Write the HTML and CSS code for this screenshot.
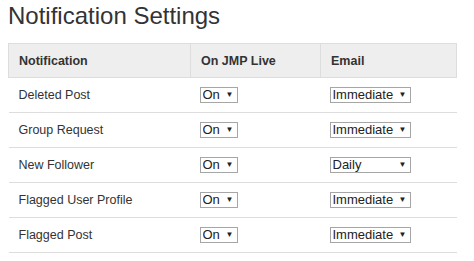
FILE: index.html
```html
<!DOCTYPE html>
<html lang="en">
<head>
    <meta charset="UTF-8">
    <title>Notification Settings</title>
    <link rel="stylesheet" href="styles.css">
</head>
<body>
    <h1>Notification Settings</h1>
    <table class="settings">
        <thead>
            <tr>
                <th class="col-name">Notification</th>
                <th class="col-live">On JMP Live</th>
                <th class="col-email">Email</th>
            </tr>
        </thead>
        <tbody>
            <tr>
                <td>Deleted Post</td>
                <td><span class="pick"><select><option>On</option><option>Off</option></select></span></td>
                <td><span class="pick"><select><option>Immediate</option><option>Daily</option><option>Weekly</option><option>Never</option></select></span></td>
            </tr>
            <tr>
                <td>Group Request</td>
                <td><span class="pick"><select><option>On</option><option>Off</option></select></span></td>
                <td><span class="pick"><select><option>Immediate</option><option>Daily</option><option>Weekly</option><option>Never</option></select></span></td>
            </tr>
            <tr>
                <td>New Follower</td>
                <td><span class="pick"><select><option>On</option><option>Off</option></select></span></td>
                <td><span class="pick"><select><option>Immediate</option><option selected>Daily</option><option>Weekly</option><option>Never</option></select></span></td>
            </tr>
            <tr>
                <td>Flagged User Profile</td>
                <td><span class="pick"><select><option>On</option><option>Off</option></select></span></td>
                <td><span class="pick"><select><option>Immediate</option><option>Daily</option><option>Weekly</option><option>Never</option></select></span></td>
            </tr>
            <tr>
                <td>Flagged Post</td>
                <td><span class="pick"><select><option>On</option><option>Off</option></select></span></td>
                <td><span class="pick"><select><option>Immediate</option><option>Daily</option><option>Weekly</option><option>Never</option></select></span></td>
            </tr>
        </tbody>
    </table>
</body>
</html>
```

FILE: styles.css
```css
body {
    font-family: "Liberation Sans", Arial, sans-serif;
    font-size: 12.5px;
    color: #333;
    margin: 0;
    padding: 0 8px;
}
h1 {
    font-size: 24px;
    font-weight: normal;
    line-height: 28px;
    margin: 2px 0 13px 0;
}
.settings {
    width: 449px;
    border-collapse: collapse;
}
.settings th {
    background-color: #eee;
    border: 1px solid #ddd;
    height: 33px;
    padding: 0 10px;
    text-align: left;
    font-weight: bold;
}
.settings td {
    border-bottom: 1px solid #ddd;
    height: 34px;
    padding: 0 10px;
}
.col-name {
    width: 161px;
}
.col-live {
    width: 109px;
}
.pick {
    position: relative;
    display: inline-block;
    margin-left: -1px;
}
.pick select {
    -webkit-appearance: none;
    appearance: none;
    font-family: inherit;
    font-size: 13px;
    color: #222;
    background-color: #fff;
    border: 1px solid #a6a6a6;
    border-radius: 0;
    height: 16px;
    line-height: 14px;
    padding: 0 16px 0 2px;
    margin: 0;
    display: block;
}
.pick::after {
    content: "\25BC";
    position: absolute;
    right: 4px;
    top: 4px;
    font-size: 8px;
    line-height: 8px;
    color: #222;
    pointer-events: none;
}
```
